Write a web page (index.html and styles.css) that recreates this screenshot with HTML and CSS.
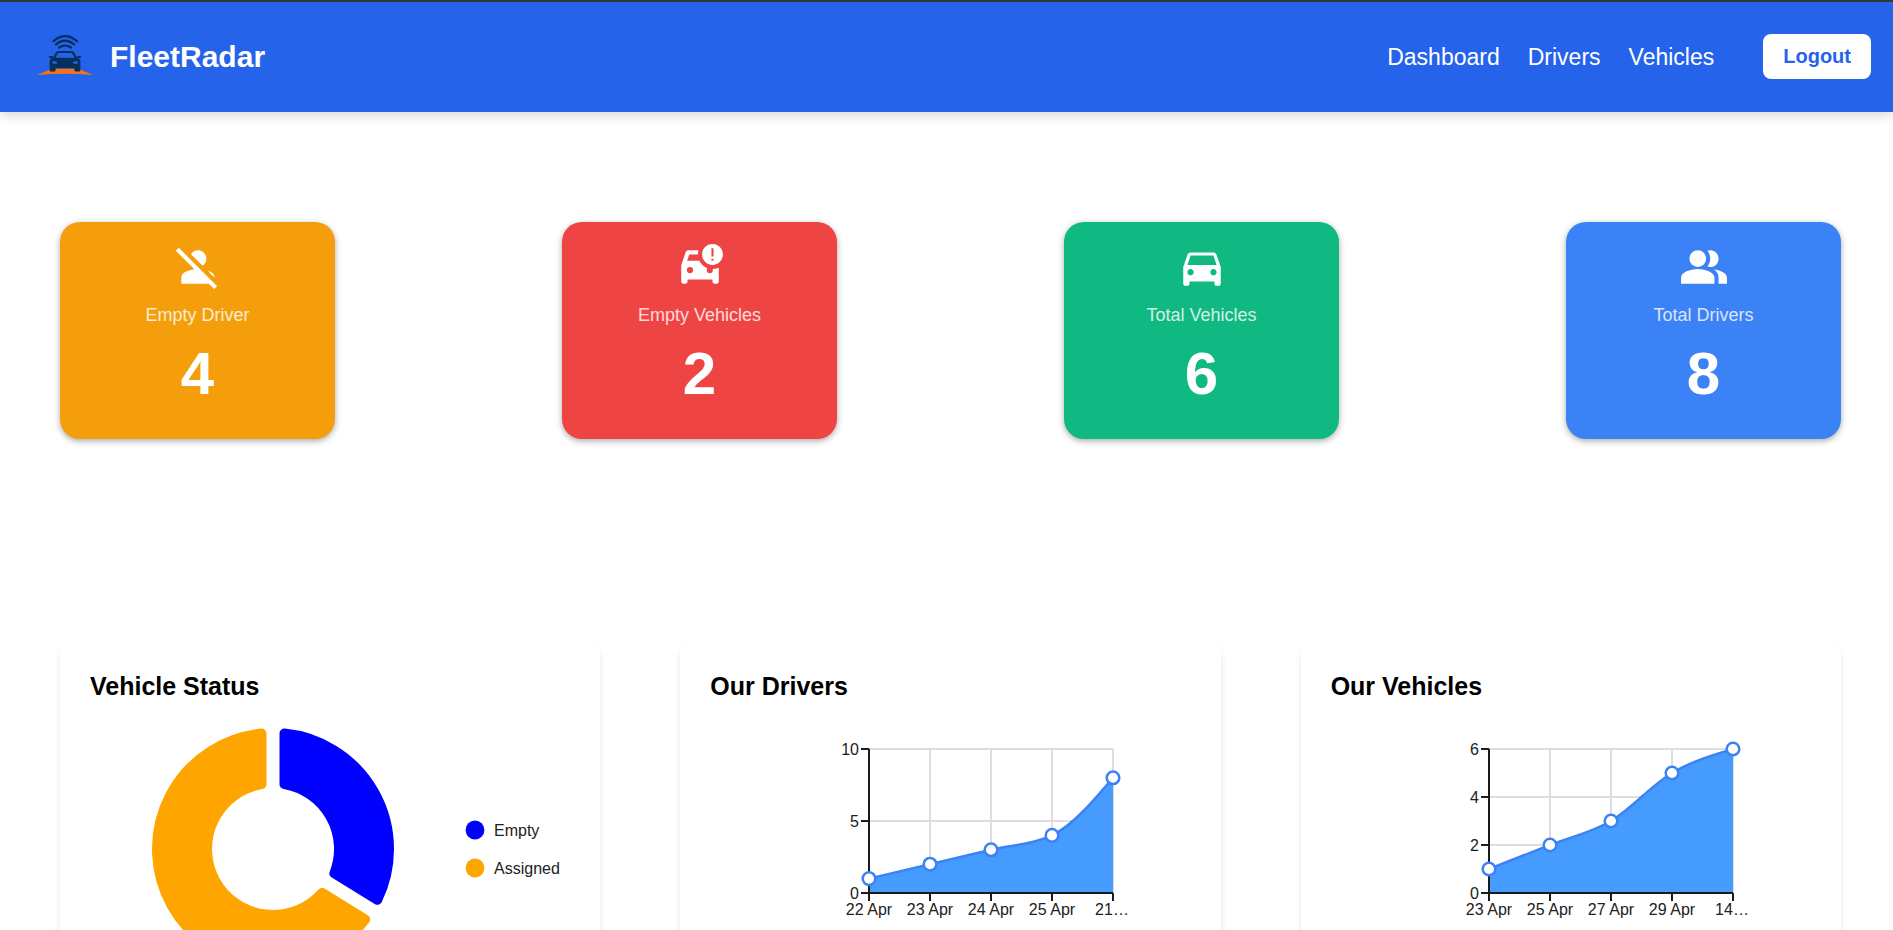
FILE: index.html
```html
<!DOCTYPE html>
<html lang="en">
<head>
<meta charset="utf-8">
<title>FleetRadar</title>
<link rel="stylesheet" href="styles.css">
</head>
<body>
<header class="navbar">
  <a class="brand" href="#">
    <svg class="brand-logo" viewBox="0 0 56 44" aria-hidden="true">
      <path class="logo-hill" d="M0 40Q8 36.500 15 33.700H41Q48 36.500 56 40Q28 37.300 0 40z"/>
      <g class="logo-wave">
        <path d="M16.500 6.200Q28 -3.800 40 6.200"/>
        <path d="M19 9.500Q28 1.800 37.200 9.500"/>
        <path d="M22.300 12.500Q28 8.500 34 12.500"/>
        <path d="M17 23L20 17.600Q20.500 17 21.500 17H34.500Q35.500 17 36 17.600L39 23"/>
      </g>
      <path class="logo-car" d="M12 22q0-1 1-1h2.500l.5 1.800h24l.5-1.800h2.500q1 0 1 1v1h-2.600l2 2.500V35q0 1.500-1.500 1.500h-3Q37.400 36.500 37.400 35v-1.800H18.600V35q0 1.500-1.500 1.500h-3Q12.600 36.500 12.600 35v-9.500L14.600 23H12z"/>
      <path class="logo-lamp" d="M15.300 26l4.500.8v1.900h-3.500q-1 0-1-1zM40.700 26l-4.500.8v1.900h3.500q1 0 1-1z"/>
    </svg>
    <span>FleetRadar</span>
  </a>
  <nav class="nav-links">
    <a href="#">Dashboard</a>
    <a href="#">Drivers</a>
    <a href="#">Vehicles</a>
    <button class="logout" type="button">Logout</button>
  </nav>
</header>

<main class="page">
  <section class="stats">
    <article class="stat stat-orange">
      <svg class="stat-icon" viewBox="0 0 24 24" aria-hidden="true"><path d="M8.650 5.820C9.360 4.720 10.600 4 12 4c2.210 0 4 1.790 4 4 0 1.400-.72 2.640-1.820 3.350L8.650 5.820zM20 17.170c-.02-1.100-.63-2.110-1.610-2.620-.54-.28-1.130-.54-1.770-.76L20 17.170zm1.190 4.020L2.810 2.810 1.390 4.220l8.890 8.890c-1.810.23-3.390.79-4.670 1.450-1 .51-1.610 1.540-1.610 2.660V20h13.170l2.610 2.610 1.410-1.420z"/></svg>
      <h2 class="stat-label">Empty Driver</h2>
      <p class="stat-value">4</p>
    </article>
    <article class="stat stat-red">
      <svg class="stat-icon" viewBox="0 0 24 24" aria-hidden="true"><path d="M11.300 4H6.500c-.66 0-1.210.42-1.420 1.010L3 11v8c0 .55.45 1 1 1h1c.55 0 1-.45 1-1v-1h12v1c0 .55.45 1 1 1h1c.55 0 1-.45 1-1v-6.680A7 7 0 0 1 11.680 9H5.810L6.850 6H11a7 7 0 0 1 .3-2z"/><circle class="lamp" cx="7.200" cy="13.500" r="1.500"/><circle class="lamp" cx="16.700" cy="13.500" r="1.500"/><path d="M18 1c-2.760 0-5 2.240-5 5s2.240 5 5 5 5-2.240 5-5-2.240-5-5-5zm.5 8h-1V8h1v1zm0-2h-1V3h1v4z"/></svg>
      <h2 class="stat-label">Empty Vehicles</h2>
      <p class="stat-value">2</p>
    </article>
    <article class="stat stat-green">
      <svg class="stat-icon" viewBox="0 0 24 24" aria-hidden="true"><path d="M18.920 6.010C18.720 5.420 18.160 5 17.500 5h-11c-.66 0-1.210.42-1.420 1.010L3 12v8c0 .55.45 1 1 1h1c.55 0 1-.45 1-1v-1h12v1c0 .55.45 1 1 1h1c.55 0 1-.45 1-1v-8l-2.080-5.990zM6.500 16c-.83 0-1.500-.67-1.500-1.500S5.670 13 6.500 13s1.500.67 1.500 1.500S7.330 16 6.500 16zm11 0c-.83 0-1.500-.67-1.500-1.500s.67-1.500 1.500-1.500 1.500.67 1.500 1.500-.67 1.500-1.500 1.500zM5 11l1.500-4.500h11L19 11H5z"/></svg>
      <h2 class="stat-label">Total Vehicles</h2>
      <p class="stat-value">6</p>
    </article>
    <article class="stat stat-blue">
      <svg class="stat-icon" viewBox="0 0 24 24" aria-hidden="true"><path d="M16.670 13.130C18.040 14.060 19 15.320 19 17v3h4v-3c0-2.180-3.570-3.470-6.330-3.870z"/><circle cx="9" cy="8" r="4"/><path d="M15 12c2.210 0 4-1.790 4-4s-1.790-4-4-4c-.47 0-.91.1-1.330.24C14.500 5.270 15 6.580 15 8s-.5 2.730-1.330 3.760c.42.14.86.24 1.330.24zM9 13c-2.670 0-8 1.340-8 4v3h16v-3c0-2.660-5.330-4-8-4z"/></svg>
      <h2 class="stat-label">Total Drivers</h2>
      <p class="stat-value">8</p>
    </article>
  </section>

  <section class="panels">
    <article class="panel">
      <h2 class="panel-title">Vehicle Status</h2>
      <svg class="chart chart-pie" viewBox="0 0 480 294" role="img" aria-label="Vehicle status">
        <g transform="translate(183 147)">
          <path class="slice slice-empty" d="M11.500-115.400A116 116 0 0 1 104.300 50.800L61.400 24.300A66 66 0 0 0 11.500-65z"/>
          <path class="slice slice-assigned" d="M92.200 70.400A116 116 0 1 1-11.500-115.400V-65A66 66 0 1 0 49.300 43.900z"/>
        </g>
        <circle class="key-empty" cx="385" cy="128" r="9.400"/>
        <text class="tick-label" x="404" y="134">Empty</text>
        <circle class="key-assigned" cx="385" cy="166" r="9.400"/>
        <text class="tick-label" x="404" y="172">Assigned</text>
      </svg>
    </article>

    <article class="panel">
      <h2 class="panel-title">Our Drivers</h2>
      <svg class="chart chart-area" viewBox="0 0 400 294" role="img" aria-label="Our drivers">
        <path class="grid" d="M119 47H363M119 119H363M180 47V191M241 47V191M302 47V191M363 47V191"/>
        <path class="area" d="M119 176.600L180 162.200L241 147.800C261.300 143 281.700 143 302 133.400C322.300 123.800 342.700 99.800 363 75.800V191H119z"/>
        <path class="axis" d="M119 47V191H363M111 47H119M111 119H119M111 191H119M119 191V199M180 191V199M241 191V199M302 191V199M363 191V199"/>
        <path class="line" d="M119 176.600L180 162.200L241 147.800C261.300 143 281.700 143 302 133.400C322.300 123.800 342.700 99.800 363 75.800"/>
        <g class="dots">
          <circle cx="119" cy="176.600" r="6.300"/><circle cx="180" cy="162.200" r="6.300"/><circle cx="241" cy="147.800" r="6.300"/><circle cx="302" cy="133.400" r="6.300"/><circle cx="363" cy="75.800" r="6.300"/>
        </g>
        <g class="tick-label label-y">
          <text x="109" y="53">10</text><text x="109" y="125">5</text><text x="109" y="197">0</text>
        </g>
        <g class="tick-label label-x">
          <text x="119" y="213">22 Apr</text><text x="180" y="213">23 Apr</text><text x="241" y="213">24 Apr</text><text x="302" y="213">25 Apr</text><text x="362" y="213">21…</text>
        </g>
      </svg>
    </article>

    <article class="panel">
      <h2 class="panel-title">Our Vehicles</h2>
      <svg class="chart chart-area" viewBox="0 0 400 294" role="img" aria-label="Our vehicles">
        <path class="grid" d="M118 47H362M118 95H362M118 143H362M179 47V191M240 47V191M301 47V191M362 47V191"/>
        <path class="area" d="M118 167L179 143C199.300 135 219.700 131 240 119C260.300 107 280.700 83 301 71C321.300 59 341.700 53 362 47V191H118z"/>
        <path class="axis" d="M118 47V191H362M110 47H118M110 95H118M110 143H118M110 191H118M118 191V199M179 191V199M240 191V199M301 191V199M362 191V199"/>
        <path class="line" d="M118 167L179 143C199.300 135 219.700 131 240 119C260.300 107 280.700 83 301 71C321.300 59 341.700 53 362 47"/>
        <g class="dots">
          <circle cx="118" cy="167" r="6.300"/><circle cx="179" cy="143" r="6.300"/><circle cx="240" cy="119" r="6.300"/><circle cx="301" cy="71" r="6.300"/><circle cx="362" cy="47" r="6.300"/>
        </g>
        <g class="tick-label label-y">
          <text x="108" y="53">6</text><text x="108" y="101">4</text><text x="108" y="149">2</text><text x="108" y="197">0</text>
        </g>
        <g class="tick-label label-x">
          <text x="118" y="213">23 Apr</text><text x="179" y="213">25 Apr</text><text x="240" y="213">27 Apr</text><text x="301" y="213">29 Apr</text><text x="361" y="213">14…</text>
        </g>
      </svg>
    </article>
  </section>
</main>
</body>
</html>
```
FILE: styles.css
```css
* {
  box-sizing: border-box;
}

body {
  margin: 0;
  background: #fff;
  color: #000;
  font-family: "Liberation Sans", Arial, sans-serif;
}

h2,
p {
  margin: 0;
}

/* Top bar */
.navbar {
  display: flex;
  align-items: center;
  justify-content: space-between;
  padding: 32px 22px 33px 37px;
  border-top: 2px solid #35363a;
  background: #2563eb;
  box-shadow: 0 4px 10px rgba(0, 0, 0, 0.14);
}

.brand {
  display: flex;
  align-items: center;
  gap: 17px;
  color: #fff;
  font-size: 30px;
  font-weight: 700;
  line-height: 34px;
  text-decoration: none;
}

.brand-logo {
  width: 56px;
  height: 44px;
}

.logo-hill {
  fill: #f97316;
}

.logo-car {
  fill: #06305c;
}

.logo-wave {
  fill: none;
  stroke: #06305c;
  stroke-width: 2.2;
  stroke-linecap: round;
}

.logo-lamp {
  fill: #2563eb;
}

.nav-links {
  display: flex;
  align-items: center;
  gap: 28px;
}

.nav-links a {
  color: #fff;
  font-size: 23px;
  line-height: 26px;
  text-decoration: none;
}

.logout {
  margin-left: 21px;
  padding: 11px 20px;
  border: 0;
  border-radius: 8px;
  background: #fff;
  color: #2563eb;
  font-family: inherit;
  font-size: 20px;
  font-weight: 700;
  line-height: 23px;
}

.page {
  padding: 110px 52px 60px 60px;
}

/* Summary cards */
.stats {
  display: flex;
  justify-content: space-between;
}

.stat {
  display: flex;
  flex-direction: column;
  align-items: center;
  width: 275px;
  padding: 20px 20px 31px;
  border-radius: 20px;
  color: #fff;
  box-shadow: 0 2px 6px rgba(0, 0, 0, 0.34);
}

.stat-orange {
  background: #f59e0b;
}

.stat-red {
  background: #ef4444;
}

.stat-green {
  background: #10b981;
}

.stat-blue {
  background: #3b82f6;
}

.stat-icon {
  width: 50px;
  height: 50px;
  fill: #fff;
}

.lamp {
  fill: #ef4444;
}

.stat-label {
  margin: 13px 0 15px;
  font-size: 18px;
  font-weight: 400;
  line-height: 20px;
  opacity: 0.8;
}

.stat-value {
  font-size: 60px;
  font-weight: 700;
  line-height: 68px;
}

/* Chart panels */
.panels {
  display: grid;
  grid-template-columns: repeat(3, 1fr);
  gap: 80px;
  margin-top: 201px;
}

.panel {
  padding: 30px;
  border-radius: 15px;
  background: #fff;
  box-shadow: 0 5px 7px rgba(0, 0, 0, 0.1);
}

.panel-title {
  font-size: 25px;
  font-weight: 700;
  line-height: 32px;
}

.chart {
  display: block;
  max-width: 100%;
}

.chart-pie {
  width: 480px;
}

.chart-area {
  width: 400px;
  margin: 0 auto;
}

.slice {
  stroke-width: 10;
  stroke-linejoin: round;
}

.slice-empty {
  fill: #00f;
  stroke: #00f;
}

.slice-assigned {
  fill: #ffa500;
  stroke: #ffa500;
}

.key-empty {
  fill: #00f;
}

.key-assigned {
  fill: #ffa500;
}

.grid {
  fill: none;
  stroke: #dedede;
  stroke-width: 1.25;
  shape-rendering: crispEdges;
}

.axis {
  fill: none;
  stroke: #1a1a1a;
  stroke-width: 1.25;
  shape-rendering: crispEdges;
}

.area {
  fill: #469bff;
}

.line {
  fill: none;
  stroke: #3b82f6;
  stroke-width: 2.5;
}

.dots {
  fill: #fff;
  stroke: #3b82f6;
  stroke-width: 2.5;
}

.tick-label {
  fill: #212121;
  font-size: 16px;
}

.label-y {
  text-anchor: end;
}

.label-x {
  text-anchor: middle;
}
```
